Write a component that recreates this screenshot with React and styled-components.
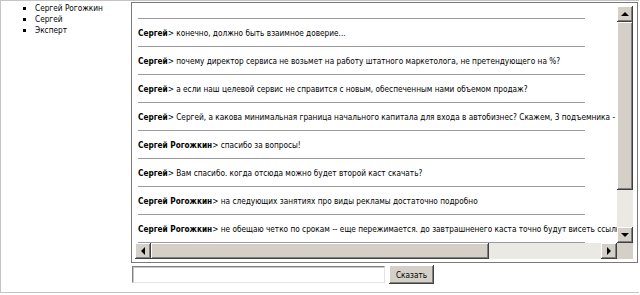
import React from 'react';
import styled, { createGlobalStyle } from 'styled-components';

const GlobalStyle = createGlobalStyle`
  html, body {
    margin: 0;
    padding: 0;
    background: #ffffff;
  }
  body {
    font-family: "DejaVu Sans Condensed", "Liberation Sans", Arial, sans-serif;
    font-size: 8.2px;
    color: #000000;
  }
`;

const Page = styled.div`
  width: 639px;
  height: 293px;
  border-top: 1px solid #c4c4c4;
  border-left: 1px solid #c4c4c4;
  border-bottom: 1px solid #c4c4c4;
  display: grid;
  grid-template-columns: 130px 1fr;
  box-sizing: border-box;
`;

const UserList = styled.ul`
  margin: 0;
  padding: 2px 0 0 34px;
  list-style: square;
  line-height: 11px;

  li {
    margin: 0;
  }
`;

const Main = styled.div`
  display: flex;
  flex-direction: column;
  padding-top: 1px;
`;

const Frame = styled.div`
  width: 507px;
  height: 261px;
  box-sizing: border-box;
  border: 1px solid #7a7a7a;
  padding: 3px 4px 3px 3px;
`;

const ChatGrid = styled.div`
  height: 100%;
  display: grid;
  grid-template-columns: 1fr 16px;
  grid-template-rows: 1fr 16px;
`;

const Messages = styled.div`
  overflow: hidden;
  padding: 12px 0 0 3px;
`;

const Message = styled.div`
  width: 447px;
  border-top: 1px solid #9c9c9c;
  padding: 8px 0 7px;
  line-height: 12px;
  white-space: nowrap;

  b {
    font-weight: bold;
  }
`;

const Bevel = styled.div`
  background: #d4d0c8;
  box-shadow: inset -1px -1px #404040, inset 1px 1px #ffffff,
    inset -2px -2px #808080, inset 2px 2px #d4d0c8;
`;

const ArrowButton = styled(Bevel)`
  width: 16px;
  height: 16px;
  flex: none;
  display: flex;
  align-items: center;
  justify-content: center;
`;

const Arrow = styled.span`
  width: 0;
  height: 0;
  border-style: solid;
  border-color: transparent;
  ${({ $dir }) =>
    $dir === 'up'
      ? 'border-width: 0 4px 4px 4px; border-bottom-color: #000;'
      : $dir === 'down'
      ? 'border-width: 4px 4px 0 4px; border-top-color: #000;'
      : $dir === 'left'
      ? 'border-width: 4px 4px 4px 0; border-right-color: #000;'
      : 'border-width: 4px 0 4px 4px; border-left-color: #000;'}
`;

const ScrollBar = styled.div`
  display: flex;
  flex-direction: ${({ $vertical }) => ($vertical ? 'column' : 'row')};
  background: #ebe9e4;
`;

const Thumb = styled(Bevel)`
  flex: none;
  ${({ $vertical, $size }) => ($vertical ? `height: ${$size}px;` : `width: ${$size}px;`)}
`;

const Track = styled.div`
  flex: 1;
`;

const Corner = styled.div`
  background: #d4d0c8;
`;

const Form = styled.form`
  display: flex;
  align-items: center;
  gap: 4px;
  margin: 2px 0 0 1px;
`;

const TextInput = styled.input`
  width: 253px;
  height: 17px;
  box-sizing: border-box;
  border: 1px solid;
  border-color: #808080 #e4e4e4 #e4e4e4 #808080;
  box-shadow: inset 1px 1px #c8c8c8;
  padding: 0 3px;
  font: inherit;
  outline: none;
`;

const SayButton = styled.button`
  height: 19px;
  width: 45px;
  padding: 0;
  font: inherit;
  color: #000;
  background: #d4d0c8;
  border: none;
  box-shadow: inset -1px -1px #404040, inset 1px 1px #ffffff,
    inset -2px -2px #808080;
`;

const users = ['Сергей Рогожкин', 'Сергей', 'Эксперт'];

const messages = [
  ['Сергей', 'конечно, должно быть взаимное доверие...'],
  ['Сергей', 'почему директор сервиса не возьмет на работу штатного маркетолога, не претендующего на %?'],
  ['Сергей', 'а если наш целевой сервис не справится с новым, обеспеченным нами объемом продаж?'],
  ['Сергей', 'Сергей, а какова минимальная граница начального капитала для входа в автобизнес? Скажем, 3 подъемника - сколько это будет стоить?'],
  ['Сергей Рогожкин', 'спасибо за вопросы!'],
  ['Сергей', 'Вам спасибо. когда отсюда можно будет второй каст скачать?'],
  ['Сергей Рогожкин', 'на следующих занятиях про виды рекламы достаточно подробно'],
  ['Сергей Рогожкин', 'не обещаю четко по срокам -- еще пережимается. до завтрашненего каста точно будут висеть ссылки на запись'],
  ['Сергей', ''],
];

export default function App() {
  return (
    <>
      <GlobalStyle />
      <Page>
        <UserList>
          {users.map(u => (
            <li key={u}>{u}</li>
          ))}
        </UserList>
        <Main>
          <Frame>
            <ChatGrid>
              <Messages>
                {messages.map(([name, text], i) => (
                  <Message key={i}>
                    <b>{name}</b>&gt; {text}
                  </Message>
                ))}
              </Messages>
              <ScrollBar $vertical>
                <ArrowButton>
                  <Arrow $dir="up" />
                </ArrowButton>
                <Thumb $vertical $size={168} />
                <Track />
                <ArrowButton>
                  <Arrow $dir="down" />
                </ArrowButton>
              </ScrollBar>
              <ScrollBar>
                <ArrowButton>
                  <Arrow $dir="left" />
                </ArrowButton>
                <Thumb $size={338} />
                <Track />
                <ArrowButton>
                  <Arrow $dir="right" />
                </ArrowButton>
              </ScrollBar>
              <Corner />
            </ChatGrid>
          </Frame>
          <Form onSubmit={e => e.preventDefault()}>
            <TextInput type="text" />
            <SayButton type="submit">Сказать</SayButton>
          </Form>
        </Main>
      </Page>
    </>
  );
}
